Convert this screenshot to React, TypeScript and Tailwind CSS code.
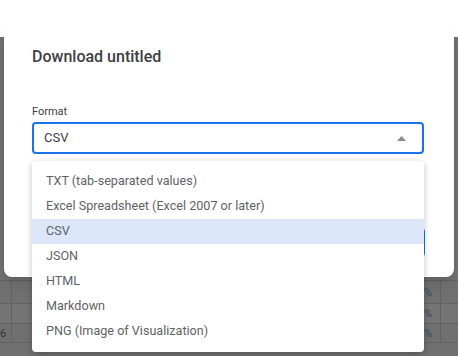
import React from "react";

const items = [
  "TXT (tab-separated values)",
  "Excel Spreadsheet (Excel 2007 or later)",
  "CSV",
  "JSON",
  "HTML",
  "Markdown",
  "PNG (Image of Visualization)",
];

export default function App() {
  return (
    <div
      className="relative w-[458px] h-[356px] overflow-hidden bg-white"
      style={{ fontFamily: "Roboto, 'Liberation Sans', sans-serif" }}
    >
      {/* Background page */}
      <div className="flex flex-col h-full">
        <div className="h-[37px] bg-white" />
        <div className="flex-1 bg-[#707070] flex flex-col">
          <div className="h-[243px]" />
          <div className="h-[23px] border-t border-[#626262] flex">
            <div className="w-[12px] border-r border-[#626262]" />
            <div className="flex-1" />
            <div className="w-[16px] text-[11px] text-[#3a4a66] leading-[23px]">%</div>
            <div className="w-[18px] border-l border-[#626262]" />
          </div>
          <div className="h-[20px] border-t border-[#626262] bg-[#747474] flex">
            <div className="w-[12px] border-r border-[#626262]" />
            <div className="flex-1" />
            <div className="w-[16px] text-[11px] text-[#3a4a66] leading-[20px]">%</div>
            <div className="w-[18px] border-l border-[#626262]" />
          </div>
          <div className="h-[20px] border-t border-[#626262] border-b flex">
            <div className="w-[12px] border-r border-[#626262] text-[11px] text-[#333] leading-[20px]">6</div>
            <div className="flex-1" />
            <div className="w-[16px] text-[11px] text-[#3a4a66] leading-[20px]">%</div>
            <div className="w-[18px] border-l border-[#626262]" />
          </div>
        </div>
      </div>

      {/* Dialog */}
      <div className="absolute left-[4px] top-[20px] w-[450px] h-[257px] bg-white rounded-lg shadow-lg">
        <div className="flex flex-col pl-[28px] pr-[30px] pt-[27px]">
          <div className="text-[16px] font-medium text-[#3c4043] leading-[20px]">
            Download untitled
          </div>
          <div className="mt-[38px] text-[11px] text-[#3c4043] leading-[14px]">Format</div>
          <div className="mt-[3px] h-[32px] border-2 border-[#1a73e8] rounded-[4px] flex items-center justify-between pl-[10px] pr-[16px]">
            <span className="text-[13px] text-[#3c4043]">CSV</span>
            <svg width="9" height="5" viewBox="0 0 9 5">
              <path d="M0 5 L4.5 0 L9 5 Z" fill="#8a8a8a" />
            </svg>
          </div>
          <div className="mt-[74px] flex justify-end">
            <div className="w-[90px] h-[29px] bg-[#1a73e8] rounded-[4px] mr-[-1px]" />
          </div>
        </div>
      </div>

      {/* Dropdown menu */}
      <div className="absolute left-[32px] top-[161px] w-[392px] h-[191px] bg-white rounded-[4px] shadow-[0_2px_6px_rgba(0,0,0,0.25)] py-[8px]">
        {items.map((it) => (
          <div
            key={it}
            className={`h-[25px] flex items-center px-[14px] text-[12.6px] text-[#5f6368] ${
              it === "CSV" ? "bg-[#dbe7f8]" : ""
            }`}
          >
            {it}
          </div>
        ))}
      </div>
    </div>
  );
}
